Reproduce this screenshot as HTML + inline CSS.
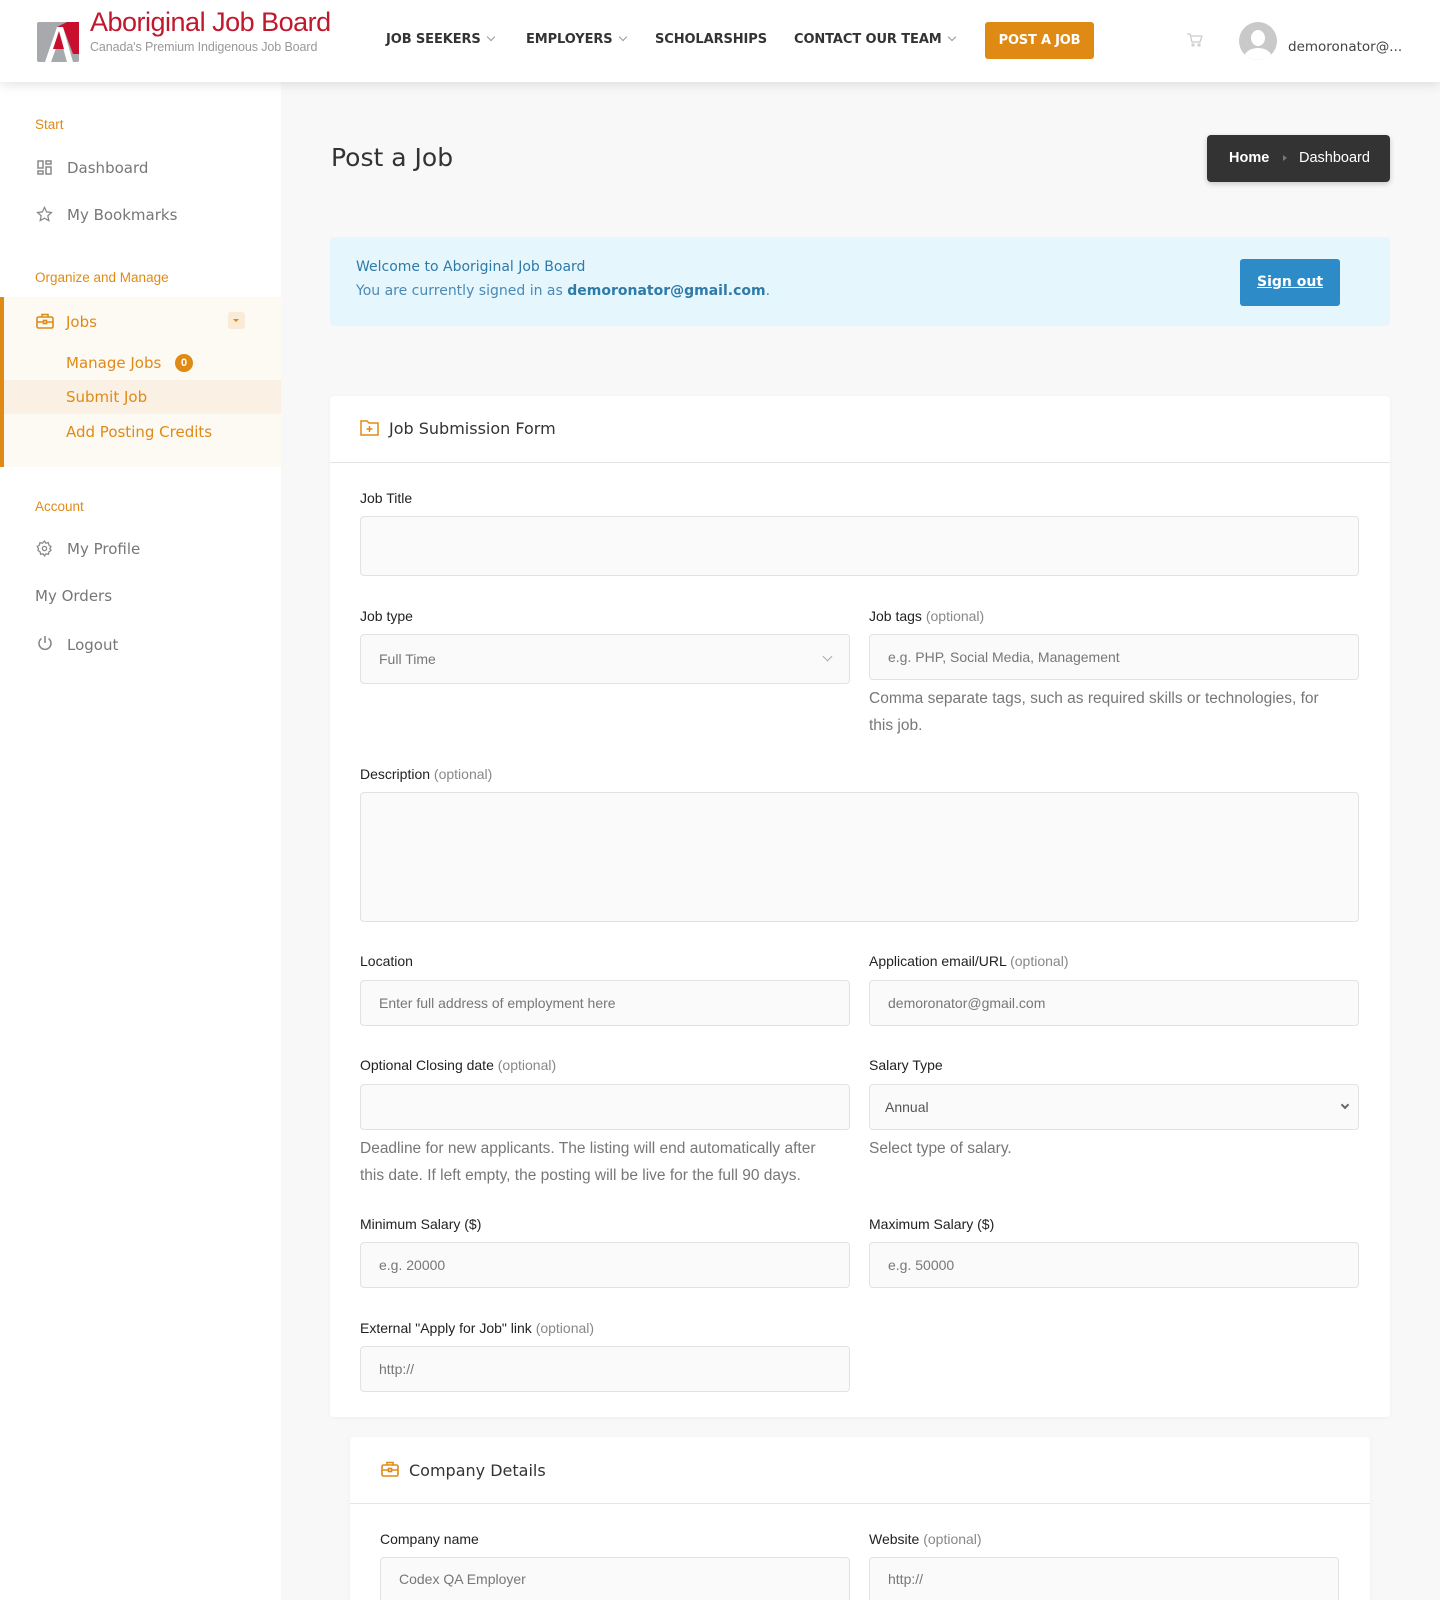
<!DOCTYPE html>
<html style="height:1600px;overflow:hidden"><head><meta charset="utf-8"><style>
*{box-sizing:border-box;margin:0;padding:0}
body{width:1440px;height:1600px;overflow:hidden;background:#f8f8f8;font-family:"Liberation Sans",Arial,sans-serif;position:relative;color:#333}
.a{position:absolute}
.m{font-family:"DejaVu Sans","Liberation Sans",sans-serif}
header{position:absolute;left:0;top:0;width:1440px;height:82px;background:#fff;box-shadow:0 2px 12px rgba(0,0,0,.12);z-index:2}
.nav{top:32px;font-size:13px;font-weight:bold;color:#333;letter-spacing:-.1px}
.car{display:inline-block;width:6px;height:6px;border-right:1px solid #999;border-bottom:1px solid #999;transform:rotate(45deg);margin-left:7px;position:relative;top:-3px}
aside{position:absolute;left:0;top:82px;width:281px;height:1518px;background:#fff}
.sh{font-size:13.5px;color:#e08a16}
.si{font-size:15px;color:#777}
.jb{font-size:15px;color:#e08a16}
.card{position:absolute;background:#fff;border-radius:4px;box-shadow:0 1px 4px rgba(0,0,0,.04)}
.lbl{font-size:14px;color:#222}
.lbl span{color:#888}
.in{position:absolute;border:1px solid #e2e2e2;border-radius:4px;background:#fafafa;font-size:14px;color:#777;padding-left:18px;display:flex;align-items:center}
.help{font-size:15.5px;color:#777;line-height:27px}
</style></head><body>
<header>
<svg class="a" style="left:37px;top:19px" width="42" height="43" viewBox="0 0 42 43"><rect x="0" y="3" width="42" height="40" rx="2" fill="#a7a9ac"/><polygon points="8,43 20,8 26,8 36,43 30,43 23,18 14,43" fill="#fff"/><polygon points="20,8 30,3 42,3 42,35 36,35 26,8" fill="#c8102e"/><polygon points="16,30 22,12 27,30" fill="#c8102e"/></svg>
<div class="a" style="left:90px;top:7px;font-size:27px;color:#c0182d;font-family:'Liberation Sans',sans-serif;letter-spacing:-.5px">Aboriginal Job Board</div>
<div class="a" style="left:90px;top:40px;font-size:12.5px;color:#999;letter-spacing:-.1px">Canada's Premium Indigenous Job Board</div>
<div class="a nav m" style="left:386px">JOB SEEKERS<span class="car"></span></div>
<div class="a nav m" style="left:526px">EMPLOYERS<span class="car"></span></div>
<div class="a nav m" style="left:655px">SCHOLARSHIPS</div>
<div class="a nav m" style="left:794px">CONTACT OUR TEAM<span class="car"></span></div>
<div class="a m" style="left:985px;top:22px;width:109px;height:37px;background:#e08a16;border-radius:3px;color:#fff;font-size:13px;font-weight:bold;text-align:center;line-height:37px;letter-spacing:-.2px">POST A JOB</div>
<svg class="a" style="left:1186px;top:32px" width="17" height="16" viewBox="0 0 17 16" fill="none" stroke="#ccc" stroke-width="1.3"><path d="M1 2h3l2 8h8l2-6H5"/><circle cx="7" cy="13" r="1"/><circle cx="13" cy="13" r="1"/></svg>
<div class="a" style="left:1239px;top:22px;width:38px;height:38px;border-radius:50%;background:#c9c9c9;overflow:hidden"><div class="a" style="left:12px;top:8px;width:14px;height:16px;border-radius:50%;background:#fff"></div><div class="a" style="left:5px;top:26px;width:28px;height:20px;border-radius:50%;background:#fff"></div></div>
<div class="a m" style="left:1288px;top:39px;font-size:13.5px;color:#444">demoronator@...</div>
</header>
<aside>
<div class="a sh" style="left:35px;top:35px">Start</div>
<svg class="a" style="left:37px;top:78px" width="15" height="15" viewBox="0 0 15 15" fill="none" stroke="#888" stroke-width="1.5"><rect x="1" y="1" width="5" height="7"/><rect x="9" y="1" width="5" height="3"/><rect x="1" y="11" width="5" height="3"/><rect x="9" y="7" width="5" height="7"/></svg>
<div class="a si m" style="left:67px;top:77px">Dashboard</div>
<svg class="a" style="left:36px;top:124px" width="17" height="16" viewBox="0 0 24 23" fill="none" stroke="#888" stroke-width="1.8"><path d="M12 2l3 6.5 7 .8-5.2 4.8 1.4 7L12 17.6 5.8 21l1.4-7L2 9.3l7-.8z"/></svg>
<div class="a si m" style="left:67px;top:124px">My Bookmarks</div>
<div class="a sh" style="left:35px;top:188px">Organize and Manage</div>
<div class="a" style="left:0;top:215px;width:281px;height:170px;background:#fdf9f3;border-left:4px solid #e08a16"></div>
<div class="a" style="left:4px;top:298px;width:277px;height:34px;background:#faf0e3"></div>
<svg class="a" style="left:36px;top:231px" width="18" height="16" viewBox="0 0 18 16" fill="none" stroke="#e08a16" stroke-width="1.6"><rect x="1" y="4" width="16" height="11" rx="1.5"/><path d="M6 4V1.5h6V4M1 9h16"/><rect x="7.5" y="7.5" width="3" height="3" fill="#fdf9f3"/></svg>
<div class="a jb m" style="left:66px;top:231px">Jobs</div>
<div class="a" style="left:228px;top:230px;width:17px;height:17px;background:#faebd6;border-radius:3px"><div class="a" style="left:5px;top:7px;border:3.5px solid transparent;border-top:3.5px solid #e08a16"></div></div>
<div class="a jb m" style="left:66px;top:272px">Manage Jobs</div>
<div class="a" style="left:175px;top:272px;width:18px;height:18px;border-radius:50%;background:#e08a16;color:#fff;font-size:11px;font-weight:bold;text-align:center;line-height:18px">0</div>
<div class="a jb m" style="left:66px;top:306px">Submit Job</div>
<div class="a jb m" style="left:66px;top:341px">Add Posting Credits</div>
<div class="a sh" style="left:35px;top:417px">Account</div>
<svg class="a" style="left:36px;top:458px" width="17" height="17" viewBox="0 0 24 24" fill="none" stroke="#888" stroke-width="1.8"><circle cx="12" cy="12" r="3"/><path d="M12 1.5l2 3 3.5-.7.7 3.5 3 2-1.7 2.7 1.7 2.7-3 2-.7 3.5-3.5-.7-2 3-2-3-3.5.7-.7-3.5-3-2L3.5 12 1.8 9.3l3-2 .7-3.5 3.5.7z"/></svg>
<div class="a si m" style="left:67px;top:458px">My Profile</div>
<div class="a si m" style="left:35px;top:505px">My Orders</div>
<svg class="a" style="left:37px;top:553px" width="16" height="16" viewBox="0 0 16 16" fill="none" stroke="#888" stroke-width="1.6"><path d="M4.5 3.5a6 6 0 1 0 7 0M8 1v7"/></svg>
<div class="a si m" style="left:67px;top:554px">Logout</div>
</aside>
<div class="a m" style="left:331px;top:143px;font-size:25px;color:#333">Post a Job</div>
<div class="a" style="left:1207px;top:135px;width:183px;height:47px;background:#333;border-radius:4px;color:#fff;font-size:14.5px;box-shadow:0 2px 6px rgba(0,0,0,.2)"><span class="a" style="left:22px;top:15px;font-weight:bold">Home</span><span class="a" style="left:76px;top:20px;border:3px solid transparent;border-left:4px solid #777"></span><span class="a" style="left:92px;top:15px">Dashboard</span></div>
<div class="a" style="left:330px;top:237px;width:1060px;height:89px;background:#e6f6fd;border-radius:4px">
<div class="a m" style="left:26px;top:22px;font-size:14px;color:#2e7aa8">Welcome to Aboriginal Job Board</div>
<div class="a m" style="left:26px;top:46px;font-size:14px;color:#4a89b3">You are currently signed in as <b style="color:#2e7aa8">demoronator@gmail.com</b>.</div>
<div class="a m" style="left:910px;top:22px;width:100px;height:47px;background:#2d8bc8;border-radius:3px;color:#fff;font-size:14px;font-weight:bold;text-align:center;line-height:47px;text-decoration:underline">Sign out</div>
</div>
<div class="card" style="left:330px;top:396px;width:1060px;height:1021px">
<svg class="a" style="left:30px;top:23px" width="19" height="17" viewBox="0 0 19 17" fill="none" stroke="#e08a16" stroke-width="1.5"><path d="M1 2h6l2 2h9v12H1z"/><path d="M9.5 7v6M6.5 10h6"/></svg>
<div class="a m" style="left:59px;top:23px;font-size:16px;color:#333">Job Submission Form</div>
<div class="a" style="left:0;top:66px;width:1060px;height:1px;background:#e5e5e5"></div>
</div>
<div class="a lbl" style="left:360px;top:490px">Job Title</div>
<div class="in" style="left:360px;top:516px;width:999px;height:60px"></div>
<div class="a lbl" style="left:360px;top:608px">Job type</div>
<div class="in" style="left:360px;top:634px;width:490px;height:50px">Full Time<span class="a" style="right:18px;top:18px;width:7px;height:7px;border-right:1px solid #aaa;border-bottom:1px solid #aaa;transform:rotate(45deg)"></span></div>
<div class="a lbl" style="left:869px;top:608px">Job tags <span>(optional)</span></div>
<div class="in" style="left:869px;top:634px;width:490px;height:46px">e.g. PHP, Social Media, Management</div>
<div class="a help" style="left:869px;top:685px;width:470px">Comma separate tags, such as required skills or technologies, for this job.</div>
<div class="a lbl" style="left:360px;top:766px">Description <span>(optional)</span></div>
<div class="in" style="left:360px;top:792px;width:999px;height:130px;background:#fafafa"></div>
<div class="a lbl" style="left:360px;top:953px">Location</div>
<div class="in" style="left:360px;top:980px;width:490px;height:46px">Enter full address of employment here</div>
<div class="a lbl" style="left:869px;top:953px">Application email/URL <span>(optional)</span></div>
<div class="in" style="left:869px;top:980px;width:490px;height:46px">demoronator@gmail.com</div>
<div class="a lbl" style="left:360px;top:1057px">Optional Closing date <span>(optional)</span></div>
<div class="in" style="left:360px;top:1084px;width:490px;height:46px"></div>
<div class="a help" style="left:360px;top:1135px;width:475px">Deadline for new applicants. The listing will end automatically after this date. If left empty, the posting will be live for the full 90 days.</div>
<div class="a lbl" style="left:869px;top:1057px">Salary Type</div>
<div class="in" style="left:869px;top:1084px;width:490px;height:46px;padding-left:15px;color:#555">Annual<span class="a" style="right:10px;top:17px;width:6px;height:6px;border-right:2px solid #666;border-bottom:2px solid #666;transform:rotate(45deg)"></span></div>
<div class="a help" style="left:869px;top:1135px">Select type of salary.</div>
<div class="a lbl" style="left:360px;top:1216px">Minimum Salary ($)</div>
<div class="in" style="left:360px;top:1242px;width:490px;height:46px">e.g. 20000</div>
<div class="a lbl" style="left:869px;top:1216px">Maximum Salary ($)</div>
<div class="in" style="left:869px;top:1242px;width:490px;height:46px">e.g. 50000</div>
<div class="a lbl" style="left:360px;top:1320px">External "Apply for Job" link <span>(optional)</span></div>
<div class="in" style="left:360px;top:1346px;width:490px;height:46px">http://</div>
<div class="card" style="left:350px;top:1437px;width:1020px;height:163px;border-radius:4px 4px 0 0">
<svg class="a" style="left:31px;top:24px" width="18" height="16" viewBox="0 0 18 16" fill="none" stroke="#e08a16" stroke-width="1.6"><rect x="1" y="4" width="16" height="11" rx="1.5"/><path d="M6 4V1.5h6V4M1 9h16"/><rect x="7.5" y="7.5" width="3" height="3" fill="#fff"/></svg>
<div class="a m" style="left:59px;top:24px;font-size:16px;color:#333">Company Details</div>
<div class="a" style="left:0;top:66px;width:1020px;height:1px;background:#e5e5e5"></div>
</div>
<div class="a lbl" style="left:380px;top:1531px">Company name</div>
<div class="in" style="left:380px;top:1557px;width:470px;height:43px;border-bottom:none;border-radius:4px 4px 0 0">Codex QA Employer</div>
<div class="a lbl" style="left:869px;top:1531px">Website <span>(optional)</span></div>
<div class="in" style="left:869px;top:1557px;width:470px;height:43px;border-bottom:none;border-radius:4px 4px 0 0">http://</div>
</body></html>
